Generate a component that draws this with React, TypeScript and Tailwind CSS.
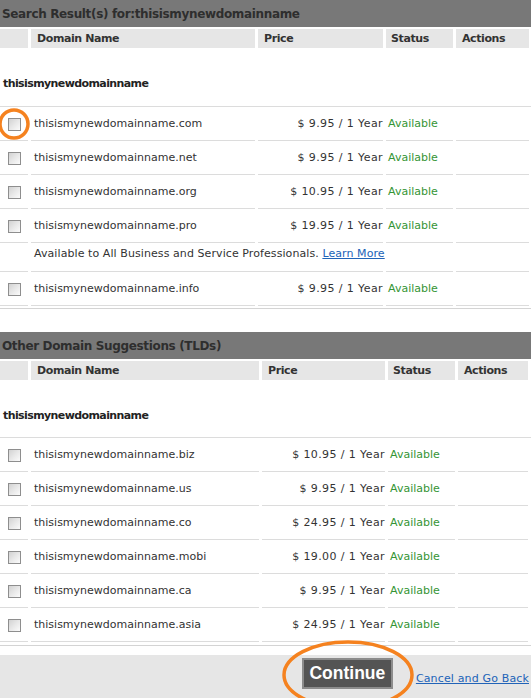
import React from "react";

const FONT = { fontFamily: '"DejaVu Sans", Verdana, sans-serif' };

type Row = { name: string; price: string; note?: boolean };

const Checkbox = () => (
  <div className="w-[13px] h-[13px] border border-[#8e8e8e] bg-gradient-to-br from-[#d2d2d2] via-[#e8e8e8] to-[#fbfbfb]" />
);

function Section({
  title,
  cols,
  rows,
  groupH,
  circleFirst,
}: {
  title: string;
  cols: string;
  rows: Row[];
  groupH: string;
  circleFirst?: boolean;
}) {
  return (
    <div>
      <div className="h-[27px] bg-[#787878] flex items-center pl-[2px] text-[12px] font-bold text-[#2e2e2e] tracking-[-0.35px]">
        {title}
      </div>
      <div
        className={`grid ${cols} gap-x-[3px] mt-[2px] h-[19px] text-[11px] font-bold text-[#333] tracking-[-0.4px]`}
      >
        <div className="bg-[#e6e6e6]" />
        <div className="bg-[#e6e6e6] pl-[6px] pt-[1px] flex items-center">Domain Name</div>
        <div className="bg-[#e6e6e6] pl-[6px] pt-[1px] flex items-center">Price</div>
        <div className="bg-[#e6e6e6] pl-[5px] pt-[1px] flex items-center">Status</div>
        <div className="bg-[#e6e6e6] pl-[6px] pt-[1px] flex items-center">Actions</div>
      </div>
      <div
        className={`${groupH} border-b border-[#dcdcdc] pt-[29px] pl-[3px] text-[11px] font-bold text-[#222] leading-[13px] tracking-[-0.6px]`}
      >
        thisismynewdomainname
      </div>
      {rows.map((r, i) =>
        r.note ? (
          <div key={i} className={`grid ${cols} gap-x-[3px] h-[29px] text-[11px] text-[#333]`}>
            <div className="border-b border-[#dcdcdc]" />
            <div className="col-span-2 border-b border-[#dcdcdc] pl-[3px] pt-[4px] leading-[13px] whitespace-nowrap tracking-[0.08px]">
              Available to All Business and Service Professionals.{" "}
              <a href="#" className="text-[#2163b8] underline">
                Learn More
              </a>
            </div>
            <div className="border-b border-[#dcdcdc]" />
            <div className="border-b border-[#dcdcdc]" />
          </div>
        ) : (
          <div key={i} className={`grid ${cols} gap-x-[3px] h-[34px] text-[11px] text-[#333]`}>
            <div className="border-b border-[#dcdcdc] flex items-center justify-center relative pt-[1px]">
              <Checkbox />
              {circleFirst && i === 0 && (
                <svg
                  className="absolute left-[-2px] top-[1px]"
                  width="34"
                  height="34"
                  viewBox="0 0 34 34"
                >
                  <circle cx="16" cy="16" r="14" fill="none" stroke="#f5821f" strokeWidth="3.5" />
                </svg>
              )}
            </div>
            <div className="border-b border-[#dcdcdc] pl-[3px] pt-[2px] flex items-center">{r.name}</div>
            <div className="border-b border-[#dcdcdc] pt-[2px] flex items-center justify-end whitespace-nowrap tracking-[0.4px]">
              {r.price}
            </div>
            <div className="border-b border-[#dcdcdc] pl-[2px] pt-[2px] flex items-center text-[#359535]">
              Available
            </div>
            <div className="border-b border-[#dcdcdc]" />
          </div>
        )
      )}
    </div>
  );
}

export default function App() {
  const rows1: Row[] = [
    { name: "thisismynewdomainname.com", price: "$ 9.95 / 1 Year" },
    { name: "thisismynewdomainname.net", price: "$ 9.95 / 1 Year" },
    { name: "thisismynewdomainname.org", price: "$ 10.95 / 1 Year" },
    { name: "thisismynewdomainname.pro", price: "$ 19.95 / 1 Year" },
    { name: "", price: "", note: true },
    { name: "thisismynewdomainname.info", price: "$ 9.95 / 1 Year" },
  ];
  const rows2: Row[] = [
    { name: "thisismynewdomainname.biz", price: "$ 10.95 / 1 Year" },
    { name: "thisismynewdomainname.us", price: "$ 9.95 / 1 Year" },
    { name: "thisismynewdomainname.co", price: "$ 24.95 / 1 Year" },
    { name: "thisismynewdomainname.mobi", price: "$ 19.00 / 1 Year" },
    { name: "thisismynewdomainname.ca", price: "$ 9.95 / 1 Year" },
    { name: "thisismynewdomainname.asia", price: "$ 24.95 / 1 Year" },
  ];
  return (
    <div className="w-[531px] h-[698px] overflow-hidden bg-white" style={FONT}>
      <Section
        title="Search Result(s) for:thisismynewdomainname"
        cols="grid-cols-[28px_224px_125px_67px_73px]"
        rows={rows1}
        groupH="h-[59px]"
        circleFirst
      />
      <div className="mt-[2px] border-t border-[#d4d4d4]" />
      <div className="h-[23px]" />
      <Section
        title="Other Domain Suggestions (TLDs)"
        cols="grid-cols-[28px_228px_123px_67px_70px]"
        rows={rows2}
        groupH="h-[58px]"
      />
      <div className="mt-[3px] border-t border-[#d4d4d4]" />
      <div className="mt-[9px] h-[60px] bg-[#e6e6e6] relative flex items-start justify-end pr-[2px] pt-[3px]">
        <button
          className="w-[91px] h-[31px] bg-[#545454] border-2 border-[#8c8c8c] text-white font-bold text-[17.5px] flex items-center justify-center"
          style={{ fontFamily: '"Liberation Sans", Arial, sans-serif' }}
        >
          Continue
        </button>
        <a
          href="#"
          className="ml-[23px] mt-[13px] text-[11px] text-[#2163b8] underline whitespace-nowrap tracking-[0.15px]"
        >
          Cancel and Go Back
        </a>
        <svg className="absolute left-[281px] top-[-15px]" width="136" height="72" viewBox="0 0 136 72">
          <ellipse cx="67" cy="35" rx="64" ry="33" fill="none" stroke="#f5821f" strokeWidth="3.5" />
        </svg>
      </div>
    </div>
  );
}
